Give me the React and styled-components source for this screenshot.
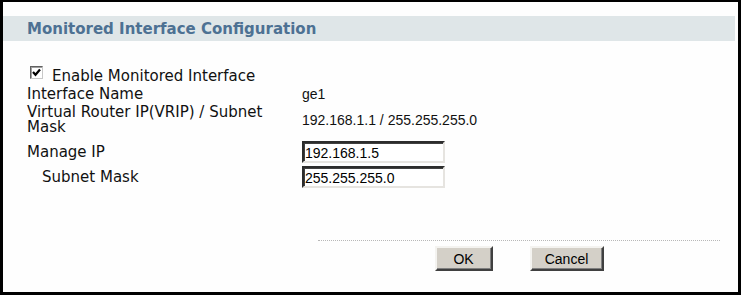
import styled, { createGlobalStyle } from 'styled-components';

const Global = createGlobalStyle`
  html, body {
    margin: 0;
    padding: 0;
    background: #ffffff;
  }
`;

const Frame = styled.div`
  box-sizing: border-box;
  width: 741px;
  height: 295px;
  border: 3px solid #000;
  border-top-width: 2px;
  background: #fefefe;
  padding-top: 14px;
  font-family: "DejaVu Sans", Verdana, sans-serif;
  font-size: 15px;
  color: #111;
`;

const Header = styled.div`
  height: 25px;
  margin-right: 3px;
  background: #dfe6e8;
  display: flex;
  align-items: center;
  padding-left: 24px;
  font-weight: bold;
  font-size: 15px;
  color: #4d7193;
`;

const Form = styled.div`
  margin-top: 25px;
  padding-left: 24px;
  display: flex;
  flex-direction: column;
`;

const Row = styled.div`
  display: grid;
  grid-template-columns: 275px 1fr;
  align-items: center;
  height: ${p => p.h}px;
`;

const Label = styled.div`
  padding-left: ${p => p.indent || 0}px;
  line-height: 15px;
  width: ${p => p.w || 'auto'};
`;

const CheckLabel = styled.label`
  display: flex;
  align-items: center;
  gap: 9px;
  padding-left: 3px;
  line-height: 15px;
`;

const Box = styled.span`
  box-sizing: border-box;
  width: 13px;
  height: 13px;
  border: 1px solid #c8c8c8;
  border-top-color: #606060;
  border-left-color: #606060;
  box-shadow: inset 1px 1px 0 #a0a0a0;
  background: #fff;
  display: inline-flex;
  align-items: center;
  justify-content: center;
  margin-top: -7px;
`;

const Value = styled.div`
  font-family: "Liberation Sans", Arial, sans-serif;
  font-size: 14px;
`;

const Field = styled.input`
  box-sizing: border-box;
  width: 143px;
  height: 22px;
  margin: 0;
  padding: 1px 1px 0;
  border: 2px inset #d4d0c8;
  border-top-color: #808080;
  border-left-color: #808080;
  border-right-color: #e6e4e0;
  border-bottom-color: #e6e4e0;
  box-shadow: inset 1px 1px 0 #404040;
  font-family: "Liberation Sans", Arial, sans-serif;
  font-size: 14px;
  color: #000;
  outline: none;
  background: #fff;
`;

const Footer = styled.div`
  margin-top: 52px;
  margin-left: 315px;
  width: 402px;
  border-top: 1px dotted #b8b8b8;
  padding-top: 5px;
  display: flex;
  justify-content: center;
  gap: 37px;
`;

const Button = styled.button`
  box-sizing: border-box;
  width: ${p => p.w}px;
  height: 25px;
  margin: 0;
  padding: 0;
  background: #d4d0c8;
  border: 2px solid;
  border-color: #f4f3f0 #404040 #404040 #f4f3f0;
  box-shadow: inset -1px -1px 0 #808080;
  font-family: "Liberation Sans", Arial, sans-serif;
  font-size: 14px;
  color: #000;
`;

const Check = () => (
  <Box>
    <svg width="9" height="9" viewBox="0 0 9 9">
      <path d="M1 4 L3.5 6.8 L8 1.5" fill="none" stroke="#000" strokeWidth="2.2" />
    </svg>
  </Box>
);

export default function App() {
  return (
    <>
      <Global />
      <Frame>
        <Header>Monitored Interface Configuration</Header>
        <Form>
          <Row h={20}>
            <CheckLabel>
              <Check />
              <span>Enable Monitored Interface</span>
            </CheckLabel>
            <span />
          </Row>
          <Row h={16}>
            <Label>Interface Name</Label>
            <Value>ge1</Value>
          </Row>
          <Row h={36}>
            <Label w="265px">Virtual Router IP(VRIP) / Subnet Mask</Label>
            <Value>192.168.1.1 / 255.255.255.0</Value>
          </Row>
          <Row h={28}>
            <Label>Manage IP</Label>
            <Field defaultValue="192.168.1.5" />
          </Row>
          <Row h={22}>
            <Label indent={15}>Subnet Mask</Label>
            <Field defaultValue="255.255.255.0" />
          </Row>
        </Form>
        <Footer>
          <Button w={58}>OK</Button>
          <Button w={74}>Cancel</Button>
        </Footer>
      </Frame>
    </>
  );
}
